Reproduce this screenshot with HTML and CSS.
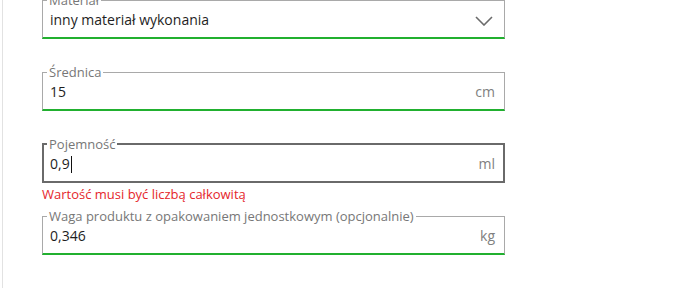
FILE: index.html
```html
<!DOCTYPE html>
<html lang="pl">
<head>
<meta charset="utf-8">
<title>Formularz</title>
<link rel="stylesheet" href="styles.css">
</head>
<body>
<div class="panel">
  <div class="field">
    <fieldset class="box valid">
      <legend>Materiał</legend>
      <div class="row">
        <span class="value">inny materiał wykonania</span>
        <svg class="chevron" width="18" height="10" viewBox="0 0 18 10" aria-hidden="true">
          <path d="M1 1 L9 9 L17 1" fill="none" stroke="#6b6b6b" stroke-width="1.6"/>
        </svg>
      </div>
    </fieldset>
    <div class="helper"></div>
  </div>

  <div class="field">
    <fieldset class="box valid">
      <legend>Średnica</legend>
      <div class="row">
        <span class="value">15</span>
        <span class="unit">cm</span>
      </div>
    </fieldset>
    <div class="helper"></div>
  </div>

  <div class="field">
    <fieldset class="box focused">
      <legend>Pojemność</legend>
      <div class="row">
        <span class="value">0,9<span class="caret"></span></span>
        <span class="unit">ml</span>
      </div>
    </fieldset>
    <div class="helper error">Wartość musi być liczbą całkowitą</div>
  </div>

  <div class="field">
    <fieldset class="box valid">
      <legend>Waga produktu z opakowaniem jednostkowym (opcjonalnie)</legend>
      <div class="row">
        <span class="value">0,346</span>
        <span class="unit">kg</span>
      </div>
    </fieldset>
    <div class="helper"></div>
  </div>
</div>
</body>
</html>
```

FILE: styles.css
```css
html, body {
  margin: 0;
  padding: 0;
  background: #ffffff;
  overflow: hidden;
}

body {
  font-family: "Open Sans", "Noto Sans", sans-serif;
  color: #222222;
}

.panel {
  margin-left: 2px;
  margin-top: -8px;
  height: 320px;
  border-left: 1px solid #e2e2e2;
  padding-left: 39px;
  box-sizing: border-box;
}

.field {
  width: 463px;
}

.box {
  margin: 0;
  padding: 0;
  min-width: 0;
  border: 1px solid #a9a9a9;
  border-bottom: 2px solid #21b02f;
}

.box.focused {
  border: 2px solid #6a6a6a;
}

.box legend {
  font-size: 13px;
  line-height: 16px;
  color: #777777;
  margin-left: 4px;
  padding: 0 2px;
}

.box.focused legend {
  margin-left: 3px;
}

.row {
  display: flex;
  align-items: center;
  justify-content: space-between;
  height: 29px;
  padding: 0 9px 5px 7px;
  box-sizing: border-box;
  font-size: 14px;
  line-height: 24px;
}

.box.focused .row {
  padding-left: 6px;
  padding-right: 8px;
  height: 29px;
}

.value {
  color: #1e1e1e;
  display: flex;
  align-items: center;
}

.caret {
  display: inline-block;
  width: 1px;
  height: 17px;
  background: #111111;
  margin-left: 1px;
}

.unit {
  color: #808080;
}

.chevron {
  margin-right: 2px;
  margin-top: 2px;
}

.helper {
  height: 25px;
  box-sizing: border-box;
  padding-top: 3px;
  font-size: 13px;
  line-height: 16px;
}

.helper.error {
  color: #e5262b;
  height: 25px;
}
```
